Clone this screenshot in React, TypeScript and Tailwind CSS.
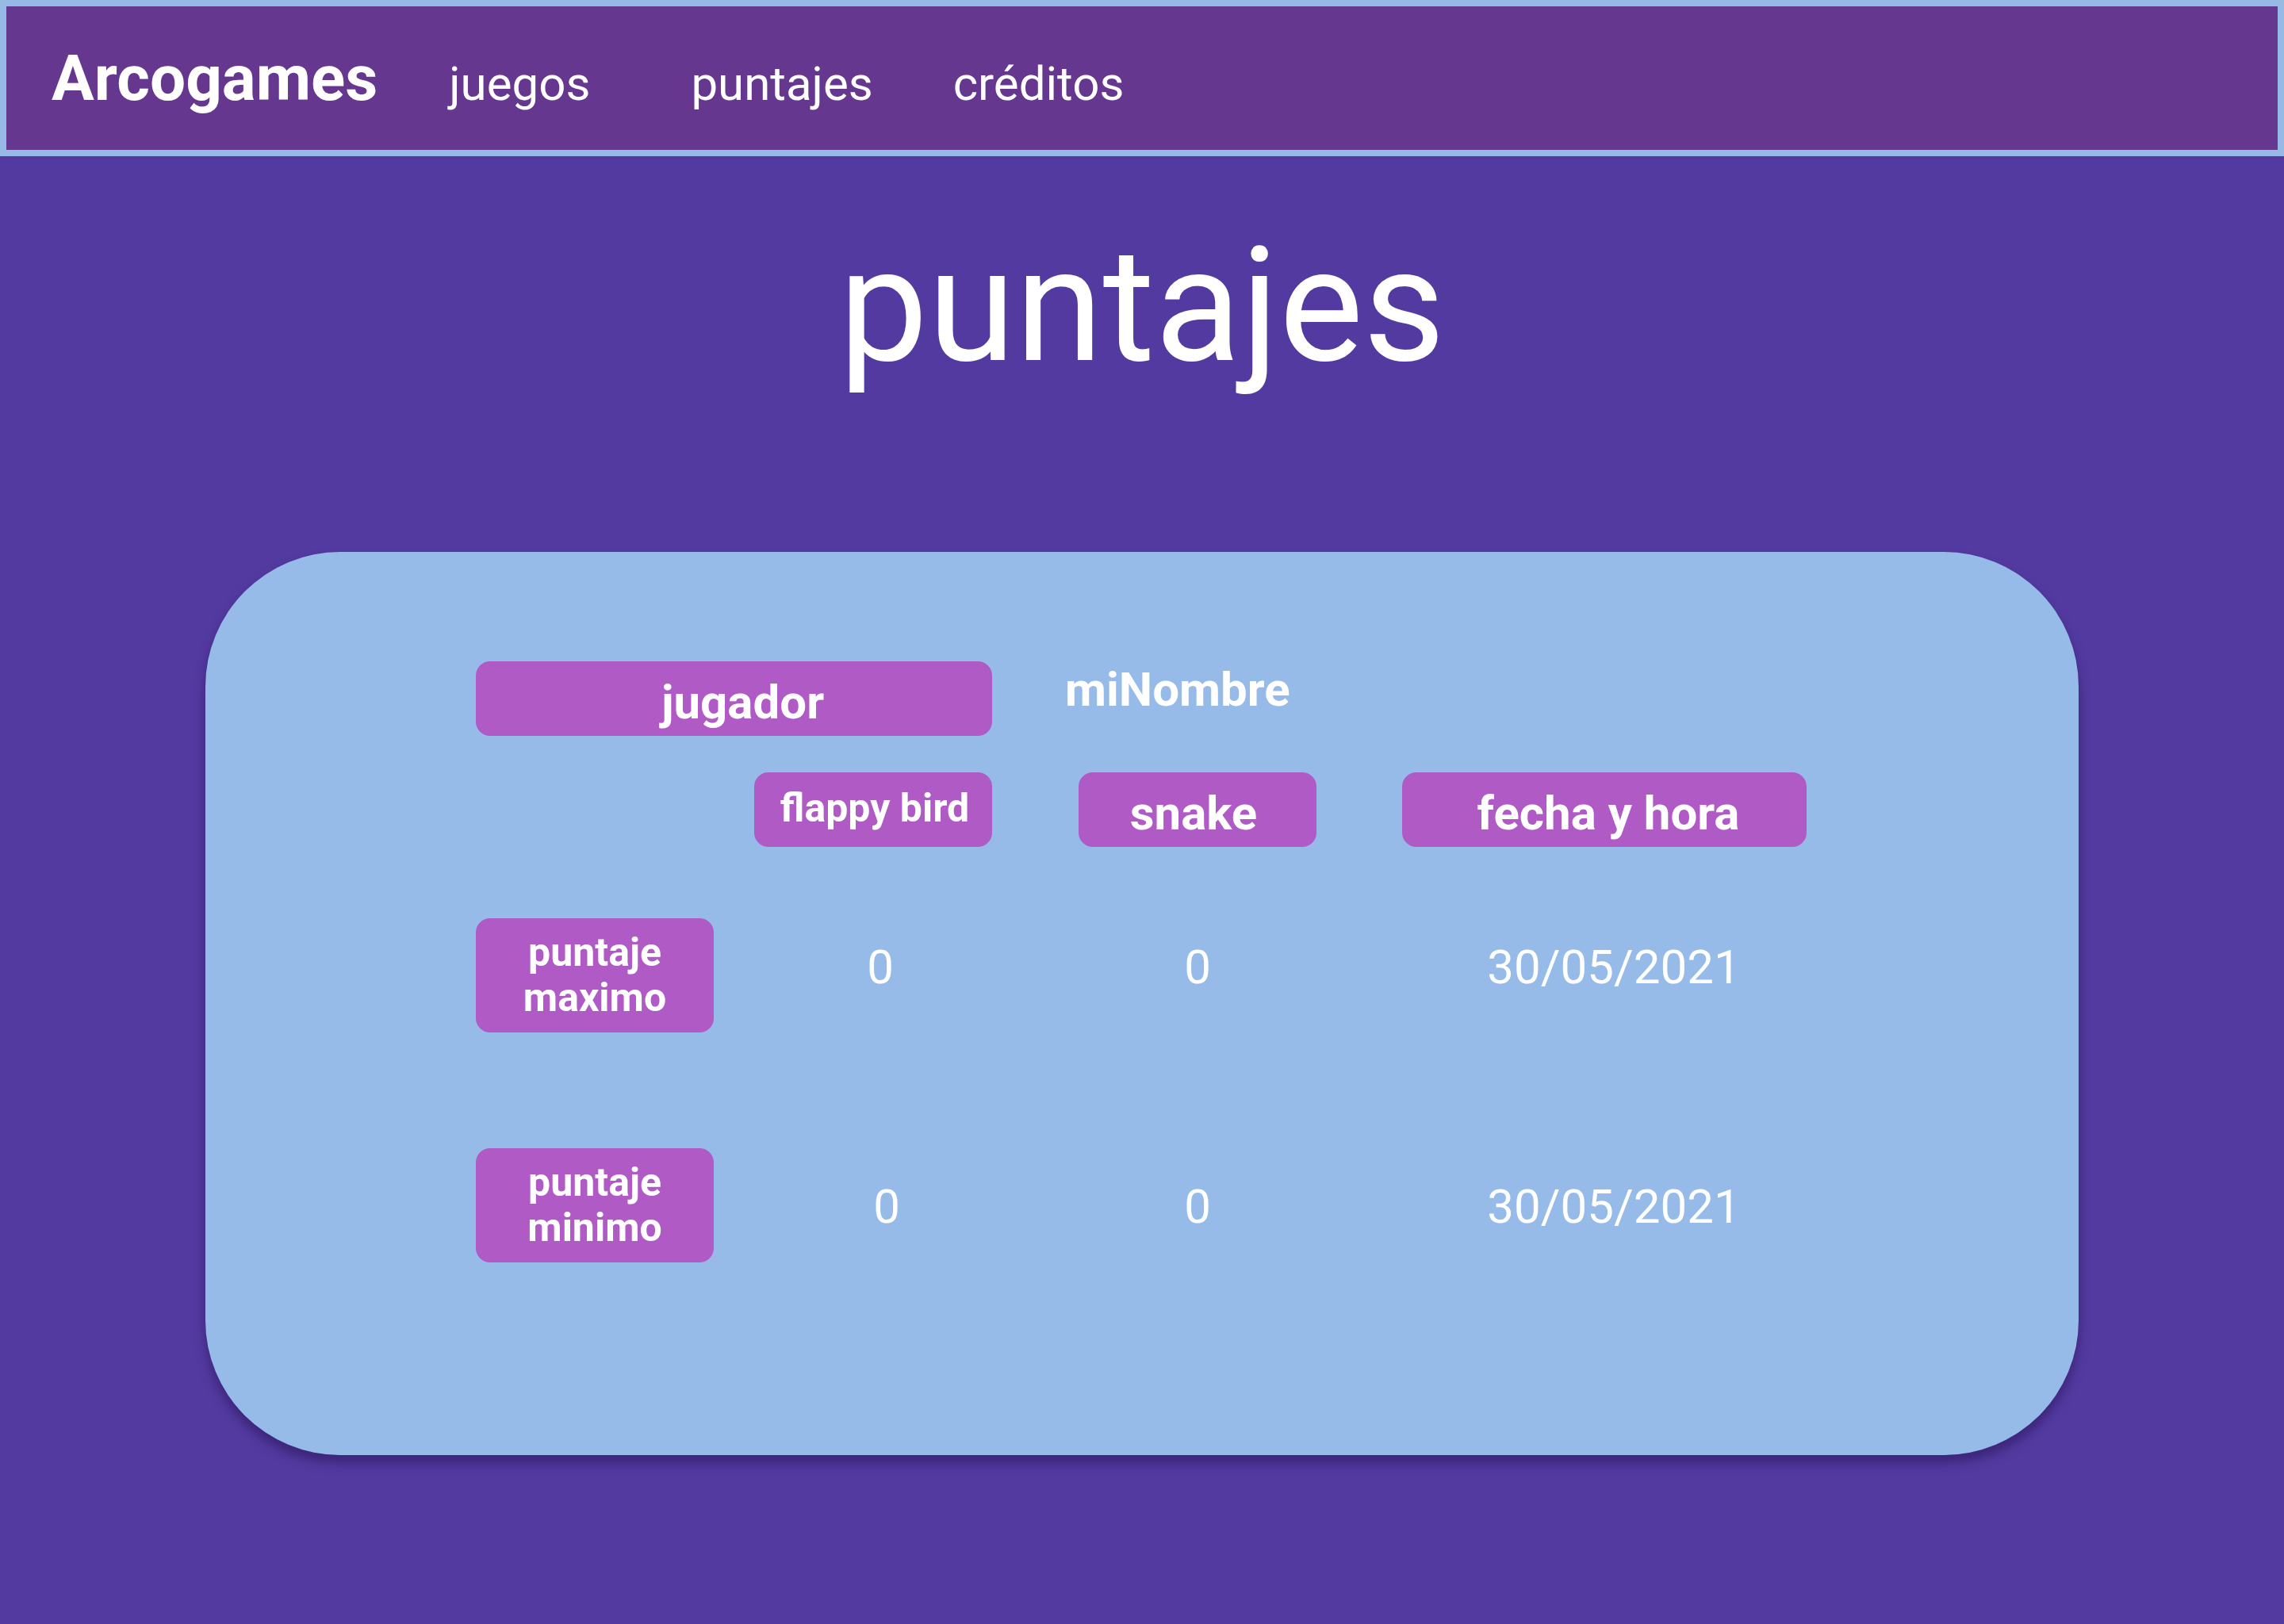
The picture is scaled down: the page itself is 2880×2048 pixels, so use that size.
import React from 'react';

const font = { fontFamily: 'Roboto, "Noto Sans", sans-serif' };

const Pill: React.FC<{ className?: string; children: React.ReactNode }> = ({ className = '', children }) => (
	<div className={`bg-[#b05ac6] rounded-[18px] text-white font-bold flex justify-center ${className}`}>
		{children}
	</div>
);

const ScoreRow: React.FC<{ label: string[]; values: string[]; pt: string; offsets: string[] }> = ({
	label,
	values,
	pt,
	offsets
}) => (
	<div className="flex items-start">
		<Pill className="w-[300px] h-[144px] items-center text-[50px] leading-[57px] flex-col">
			{label.map((l) => (
				<span key={l}>{l}</span>
			))}
		</Pill>
		<div className={`ml-[51px] w-[300px] text-center text-[60px] leading-[60px] text-white ${pt} ${offsets[0]}`}>
			{values[0]}
		</div>
		<div className={`ml-[109px] w-[300px] text-center text-[60px] leading-[60px] text-white ${pt}`}>
			{values[1]}
		</div>
		<div className={`ml-[108px] w-[510px] text-center text-[60px] leading-[60px] text-white ${pt} ${offsets[1]}`}>
			{values[2]}
		</div>
	</div>
);

export default function App() {
	return (
		<div className="min-h-[2048px] bg-[#533aa0] text-white" style={font}>
			<nav className="h-[197px] border-[8px] border-[#96b9e6] bg-[#66378f] flex items-center pl-[57px]">
				<div className="flex items-baseline">
					<span className="text-[80px] font-bold leading-none">Arcogames</span>
					<a className="ml-[90px] text-[60px] leading-none">juegos</a>
					<a className="ml-[127px] text-[60px] leading-none">puntajes</a>
					<a className="ml-[101px] text-[60px] leading-none">créditos</a>
				</div>
			</nav>

			<h1 className="mt-[89px] text-center text-[200px] leading-none font-normal">puntajes</h1>

			<div className="mt-[210px] mx-auto w-[2362px] h-[1139px] rounded-[170px] bg-[#96bbe8] shadow-[0_10px_14px_rgba(40,20,90,0.55)] pt-[138px] pl-[341px]">
				<div className="flex items-start">
					<Pill className="w-[651px] h-[94px] pt-[22px] pl-[22px] text-[60px] leading-[60px]">jugador</Pill>
					<span className="ml-[92px] mt-[6px] text-[60px] leading-[60px] font-bold">miNombre</span>
				</div>

				<div className="flex items-start mt-[46px]">
					<div className="w-[351px]" />
					<Pill className="w-[300px] h-[94px] pt-[20px] pl-[4px] text-[50px] leading-[50px]">flappy bird</Pill>
					<Pill className="ml-[109px] w-[300px] h-[94px] pt-[22px] pr-[10px] text-[60px] leading-[60px]">snake</Pill>
					<Pill className="ml-[108px] w-[510px] h-[94px] pt-[22px] pl-[10px] text-[60px] leading-[60px]">fecha y hora</Pill>
				</div>

				<div className="mt-[90px]">
					<ScoreRow
						label={['puntaje', 'maximo']}
						values={['0', '0', '30/05/2021']}
						pt="pt-[32px]"
						offsets={['pl-[18px]', 'pl-[24px]']}
					/>
				</div>

				<div className="mt-[146px]">
					<ScoreRow
						label={['puntaje', 'minimo']}
						values={['0', '0', '30/05/2021']}
						pt="pt-[44px]"
						offsets={['pl-[34px]', 'pl-[24px]']}
					/>
				</div>
			</div>
		</div>
	);
}
